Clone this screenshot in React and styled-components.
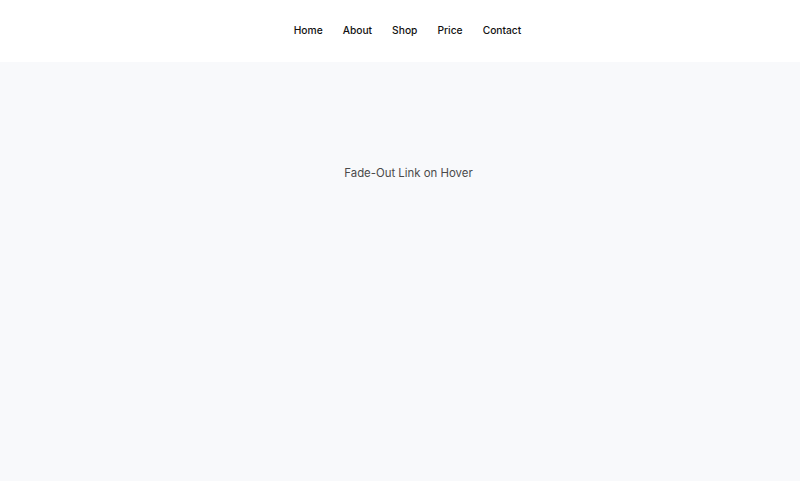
import React from "react";
import styled, { createGlobalStyle } from "styled-components";

const Global = createGlobalStyle`
  html, body { margin: 0; padding: 0; }
  body { font-family: Inter, "Noto Sans", sans-serif; background: #f8f9fb; }
`;

const Page = styled.div`
  min-height: 481px;
  display: flex;
  flex-direction: column;
`;

const Header = styled.header`
  height: 62px;
  background: #ffffff;
  display: flex;
  align-items: center;
  justify-content: center;
`;

const Nav = styled.nav`
  display: flex;
  gap: 20px;
  margin-left: 15px;
  margin-top: -2px;
`;

const NavLink = styled.a`
  font-size: 10.25px;
  font-weight: 500;
  color: #111111;
  text-decoration: none;
  transition: opacity 0.3s;
  &:hover { opacity: 0.5; }
`;

const Main = styled.main`
  flex: 1;
  display: flex;
  justify-content: center;
  padding-top: 104px;
`;

const Caption = styled.p`
  margin: 0;
  font-size: 11.4px;
  color: #4a4a4a;
  margin-left: 17px;
`;

export default function App() {
  const links = ["Home", "About", "Shop", "Price", "Contact"];
  return (
    <>
      <Global />
      <Page>
        <Header>
          <Nav>
            {links.map((l) => (
              <NavLink key={l} href="#">{l}</NavLink>
            ))}
          </Nav>
        </Header>
        <Main>
          <Caption>Fade-Out Link on Hover</Caption>
        </Main>
      </Page>
    </>
  );
}
